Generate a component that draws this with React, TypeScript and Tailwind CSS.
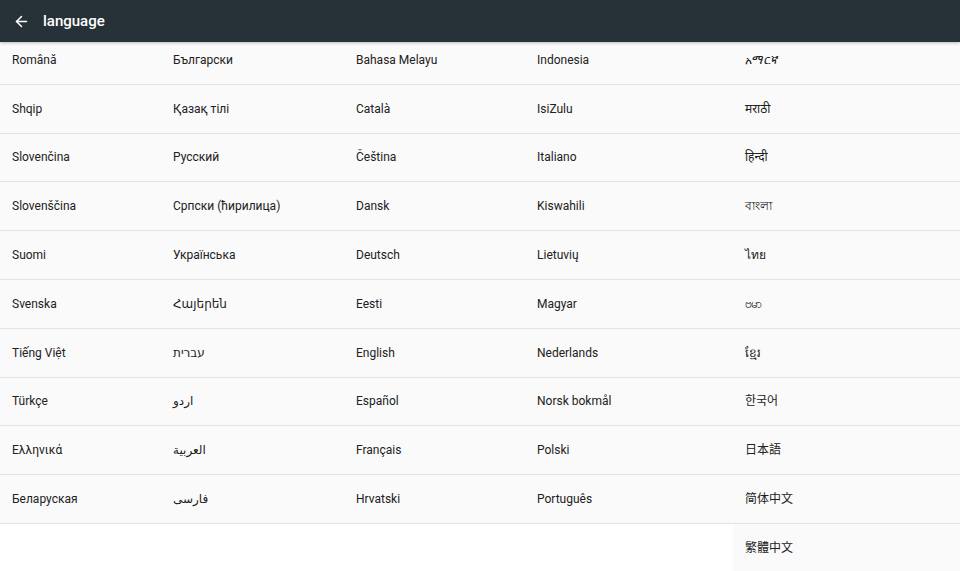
import { ArrowLeft } from 'lucide-react'

const columns: string[][] = [
  ['Română', 'Shqip', 'Slovenčina', 'Slovenščina', 'Suomi', 'Svenska', 'Tiếng Việt', 'Türkçe', 'Ελληνικά', 'Беларуская'],
  ['Български', 'Қазақ тілі', 'Русский', 'Српски (ћирилица)', 'Українська', 'Հայերեն', 'עברית', 'اردو', 'العربية', 'فارسی'],
  ['Bahasa Melayu', 'Català', 'Čeština', 'Dansk', 'Deutsch', 'Eesti', 'English', 'Español', 'Français', 'Hrvatski'],
  ['Indonesia', 'IsiZulu', 'Italiano', 'Kiswahili', 'Lietuvių', 'Magyar', 'Nederlands', 'Norsk bokmål', 'Polski', 'Português'],
  ['አማርኛ', 'मराठी', 'हिन्दी', 'বাংলা', 'ไทย', 'ဗမာ', 'ខ្មែរ', '한국어', '日本語', '简体中文', '繁體中文'],
]

export default function App() {
  return (
    <div
      className="h-[571px] w-[960px] overflow-hidden bg-white text-[#212121]"
      style={{ fontFamily: 'Roboto, "Noto Sans", "Noto Sans CJK SC", "DejaVu Sans", sans-serif' }}
    >
      {/* Barra superior */}
      <header className="relative z-10 flex h-[42px] items-center gap-[13px] bg-[#263238] px-[13px] text-white shadow-[0_1px_3px_rgba(0,0,0,0.25)]">
        <ArrowLeft size={17} strokeWidth={2.2} />
        <h1 className="text-[15px] font-medium leading-none">language</h1>
      </header>

      {/* Lista de idiomas, columna por columna */}
      <div className="-mt-[6px] grid grid-cols-[161px_183px_181px_208px_1fr] items-start">
        {columns.map((col, i) => (
          <ul key={i} className="flex flex-col">
            {col.map((name) => (
              <li
                key={name}
                className="flex h-[48.8px] items-center border-b border-[#e3e3e3] bg-[#fafafa] px-3 text-[12px]"
              >
                <span dir="auto" className="text-left">{name}</span>
              </li>
            ))}
          </ul>
        ))}
      </div>
    </div>
  )
}
